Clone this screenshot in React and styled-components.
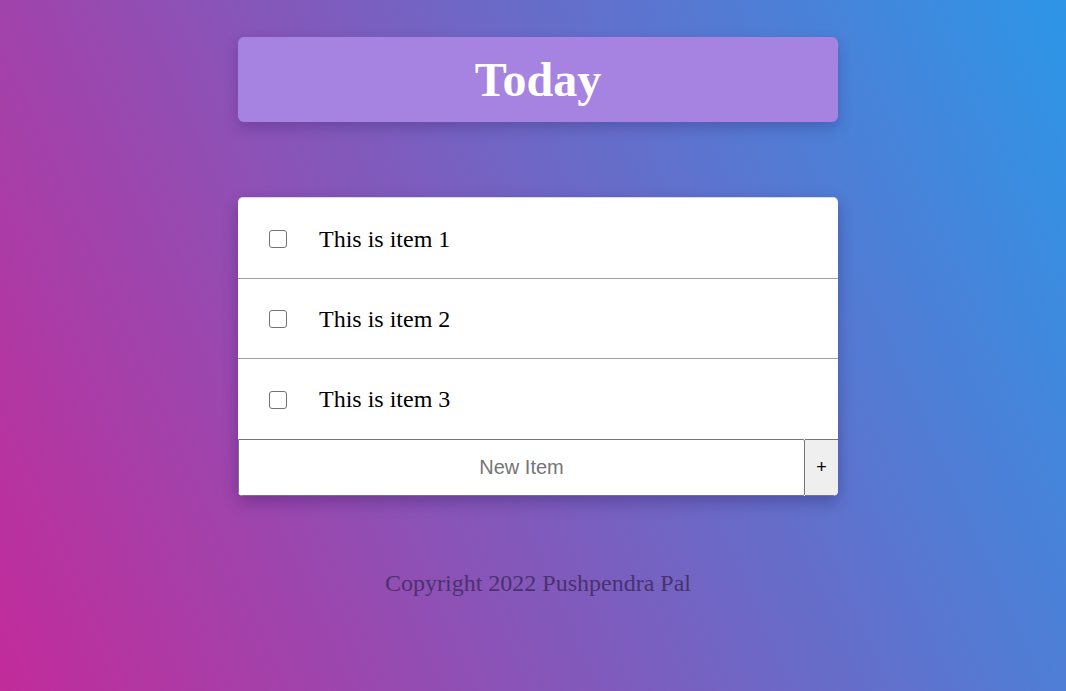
import React from 'react';
import styled, { createGlobalStyle } from 'styled-components';

const GlobalStyle = createGlobalStyle`
  html, body {
    margin: 0;
    padding: 0;
  }
  body {
    min-height: 100vh;
    background: linear-gradient(66deg, #c22b9a 0%, #2d96e7 100%);
    font-family: "Liberation Serif", "Times New Roman", serif;
  }
`;

const Page = styled.div`
  min-height: 100vh;
  display: flex;
  flex-direction: column;
  align-items: center;
  padding: 37px 0 0 10px;
  box-sizing: border-box;
`;

const Heading = styled.div`
  width: 600px;
  height: 85px;
  background: #a683e0;
  border-radius: 6px;
  box-shadow: 0 6px 14px rgba(40, 20, 90, 0.25);
  display: flex;
  align-items: center;
  justify-content: center;

  h1 {
    margin: 0;
    color: #ffffff;
    font-size: 48px;
    font-weight: 700;
  }
`;

const Card = styled.div`
  width: 600px;
  margin-top: 75px;
  background: #ffffff;
  border-top: 1px solid #d8d8d8;
  border-radius: 5px;
  box-sizing: border-box;
  overflow: hidden;
  box-shadow: 0 6px 16px rgba(30, 10, 80, 0.3);
`;

const Item = styled.div`
  height: ${(props) => (props.first ? '81px' : '80px')};
  display: flex;
  align-items: center;
  padding: ${(props) => (props.first ? '2px' : '1px')} 0 0 31px;
  box-sizing: border-box;
  border-bottom: ${(props) => (props.last ? 'none' : '1px solid #a0a0a0')};

  p {
    margin: 0 0 0 32px;
    font-size: 24px;
    color: #000000;
  }
`;

const Check = styled.input`
  appearance: none;
  width: 18px;
  height: 18px;
  margin: 0;
  border: 1.5px solid #737373;
  border-radius: 3px;
  background: #ffffff;
  box-sizing: border-box;

  &:checked {
    background: #0075ff;
    border-color: #0075ff;
  }
`;

const AddForm = styled.form`
  display: flex;
  height: 57px;
  margin: 0;
`;

const NewInput = styled.input`
  flex: 1;
  height: 100%;
  margin: 0;
  border: 1px solid #767676;
  border-radius: 0 2px 2px 0;
  box-sizing: border-box;
  text-align: center;
  font-family: "Liberation Sans", Arial, sans-serif;
  font-size: 20px;
  outline: none;

  &::placeholder {
    color: #757575;
  }
`;

const AddButton = styled.button`
  width: 33px;
  height: 100%;
  margin: 0;
  border: 1px solid #767676;
  border-left: none;
  border-right: none;
  background: #efefef;
  font-family: "Liberation Sans", Arial, sans-serif;
  font-size: 18px;
  color: #000000;
  padding: 0;
`;

const Footer = styled.footer`
  margin-top: 74px;
  font-size: 24px;
  color: #4a3170;
  text-align: center;
`;

const items = ['This is item 1', 'This is item 2', 'This is item 3'];

export default function App() {
  return (
    <>
      <GlobalStyle />
      <Page>
        <Heading>
          <h1>Today</h1>
        </Heading>
        <Card>
          {items.map((text, i) => (
            <Item key={text} first={i === 0} last={i === items.length - 1}>
              <Check type="checkbox" />
              <p>{text}</p>
            </Item>
          ))}
          <AddForm onSubmit={(e) => e.preventDefault()}>
            <NewInput type="text" placeholder="New Item" />
            <AddButton type="submit">+</AddButton>
          </AddForm>
        </Card>
        <Footer>Copyright 2022 Pushpendra Pal</Footer>
      </Page>
    </>
  );
}
